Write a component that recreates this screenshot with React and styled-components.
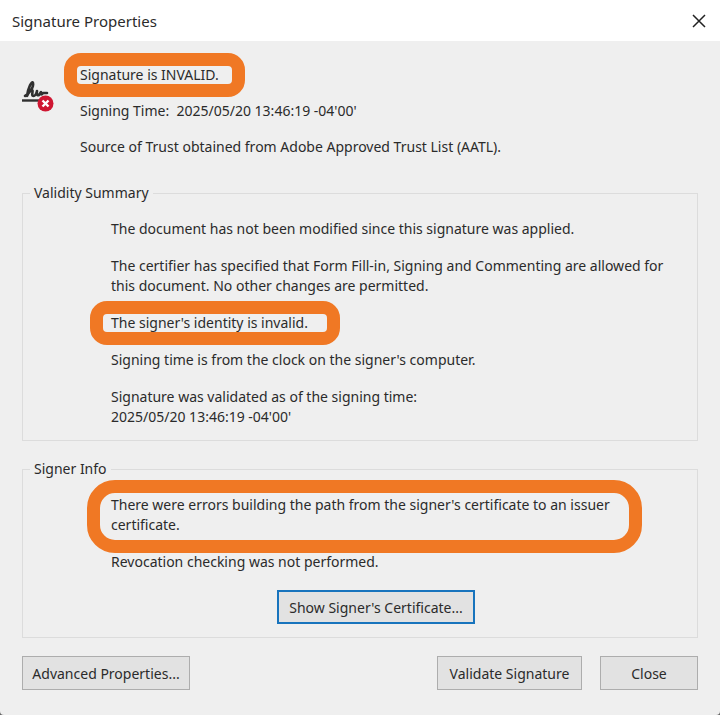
import styled, { createGlobalStyle } from 'styled-components';

export default function App() {
    return (
        <>
            <GlobalStyle />
            <Dialog role="dialog" aria-labelledby="dialog-title">
                <TitleBar>
                    <Title id="dialog-title">Signature Properties</Title>
                    <CloseIconButton aria-label="Close window">
                        <svg width="14" height="14" viewBox="0 0 14 14" fill="none" stroke="#222" strokeWidth="1.5">
                            <path d="M1 1L13 13M13 1L1 13" />
                        </svg>
                    </CloseIconButton>
                </TitleBar>
                <Content>
                    <Summary>
                        <SignatureIcon />
                        <Messages gap={16}>
                            <Message><Highlight left={16} right={26}>Signature is INVALID.</Highlight></Message>
                            <Message>Signing Time:&nbsp; 2025/05/20 13:46:19 -04'00'</Message>
                            <Message>Source of Trust obtained from Adobe Approved Trust List (AATL).</Message>
                        </Messages>
                    </Summary>

                    <Group>
                        <Legend>Validity Summary</Legend>
                        <Messages gap={17} indent>
                            <Message>The document has not been modified since this signature was applied.</Message>
                            <Message>
                                The certifier has specified that Form Fill-in, Signing and Commenting are allowed for
                                this document. No other changes are permitted.
                            </Message>
                            <Message><Highlight left={21} right={32}>The signer's identity is invalid.</Highlight></Message>
                            <Message>Signing time is from the clock on the signer's computer.</Message>
                            <Message>
                                Signature was validated as of the signing time:<br />
                                2025/05/20 13:46:19 -04'00'
                            </Message>
                        </Messages>
                    </Group>

                    <Group>
                        <Legend>Signer Info</Legend>
                        <Messages gap={17} indent>
                            <Message>
                                <Highlight large left={24} right={32}>
                                    There were errors building the path from the signer's certificate to an issuer<br />
                                    certificate.
                                </Highlight>
                            </Message>
                            <Message>Revocation checking was not performed.</Message>
                        </Messages>
                        <GroupActions>
                            <Button width={198} focused>Show Signer's Certificate...</Button>
                        </GroupActions>
                    </Group>

                    <Footer>
                        <Button width={168}>Advanced Properties...</Button>
                        <FooterRight>
                            <Button width={145}>Validate Signature</Button>
                            <Button width={98}>Close</Button>
                        </FooterRight>
                    </Footer>
                </Content>
            </Dialog>
        </>
    )
}

function SignatureIcon() {
    return (
        <IconHolder>
            <svg width="33" height="34" viewBox="0 0 33 34" fill="none">
                <path
                    d="M3 16C7 14 12 7 11 3C10 0 6 8 5 16C7 11 10 9 10.500 10.500C11 12 9 16 11.500 16C13.500 16 14.500 13 15 11C14.500 14 15 16 17 15L19 12C18.500 15 20 15 21 13L25 13"
                    stroke="#303030"
                    strokeWidth="2.600"
                    strokeLinecap="round"
                    strokeLinejoin="round"
                />
                <path d="M0 20.500H18" stroke="#303030" strokeWidth="2.400" />
                <circle cx="23.500" cy="23.500" r="8" fill="#cf1632" />
                <path d="M20.500 20.500L26.500 26.500M26.500 20.500L20.500 26.500" stroke="#fff" strokeWidth="2.400" />
            </svg>
        </IconHolder>
    )
}

const GlobalStyle = createGlobalStyle`
    * {
        box-sizing: border-box;
    }
    body {
        margin: 0;
        background-color: #666;
        color: #2b2b2b;
        font-family: 'Noto Sans', 'Open Sans', sans-serif;
        font-size: 14px;
        line-height: 20px;
    }
`;

const Dialog = styled.div`
    display: flex;
    flex-direction: column;
    min-height: 100vh;
    background-color: #efefef;
    border-radius: 0 0 4px 4px;
`;

const TitleBar = styled.div`
    display: flex;
    align-items: center;
    justify-content: space-between;
    height: 41px;
    padding: 0 8px 0 12px;
    background-color: #fff;
`;

const Title = styled.h1`
    margin: 0;
    font-size: 15px;
    font-weight: 400;
`;

const CloseIconButton = styled.button`
    display: flex;
    padding: 6px;
    border: none;
    background: none;
`;

const Content = styled.div`
    display: flex;
    flex-direction: column;
    padding: 24px 22px;
`;

const Summary = styled.div`
    display: flex;
    margin-bottom: 26px;
`;

const IconHolder = styled.div`
    flex: none;
    width: 58px;
    padding-top: 15px;
`;

const Messages = styled.div`
    display: flex;
    flex-direction: column;
    gap: ${props => props.gap}px;
    padding-left: ${props => props.indent ? "81px" : "0"};
`;

const Message = styled.p`
    margin: 0;
`;

const Highlight = styled.span`
    position: relative;
    display: inline-block;
    &::after {
        content: "";
        position: absolute;
        top: ${props => props.large ? "-15px" : "-12px"};
        bottom: ${props => props.large ? "-18px" : "-12px"};
        left: -${props => props.left}px;
        right: -${props => props.right}px;
        border: 13px solid #f07824;
        border-radius: ${props => props.large ? "28px" : "17px"};
        pointer-events: none;
    }
`;

const Group = styled.fieldset`
    min-width: 0;
    margin: 0 0 18px;
    padding: 16px 7px 13px;
    border: 1px solid #dcdcdc;
`;

const Legend = styled.legend`
    padding: 0 4px;
`;

const GroupActions = styled.div`
    display: flex;
    justify-content: center;
    margin-top: 18px;
    padding-left: 32px;
`;

const Button = styled.button`
    width: ${props => props.width}px;
    height: 34px;
    padding: 0;
    border: ${props => props.focused ? "2px solid #1874bd" : "1px solid #adadad"};
    background-color: #e2e2e2;
    color: inherit;
    font-family: inherit;
    font-size: 14px;
    white-space: nowrap;
`;

const Footer = styled.div`
    display: flex;
    flex-wrap: wrap;
    justify-content: space-between;
    gap: 18px;
`;

const FooterRight = styled.div`
    display: flex;
    gap: 18px;
`;
